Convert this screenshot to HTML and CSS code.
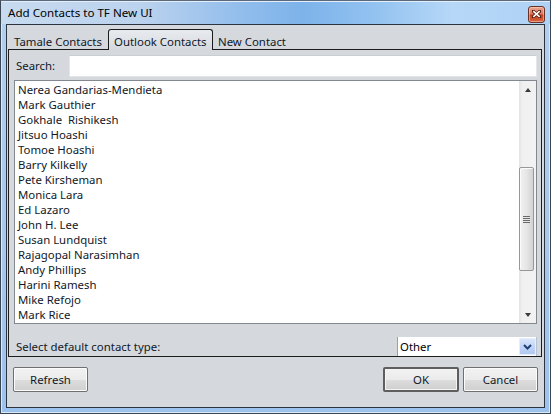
FILE: index.html
```html
<!DOCTYPE html>
<html lang="en">
<head>
  <meta charset="UTF-8" />
  <title>Add Contacts to TF New UI</title>
  <link rel="stylesheet" href="styles.css">
</head>
<body>
  <div class="window">
    <div class="titlebar">
      <span class="title">Add Contacts to TF New UI</span>
      <span class="close">
        <svg width="9" height="8" viewBox="0 0 9 8">
          <path d="M1 1 L8 7 M8 1 L1 7" stroke="#5a1b10" stroke-width="3.2" stroke-linecap="square"/>
          <path d="M1.3 1.2 L7.7 6.8 M7.7 1.2 L1.3 6.8" stroke="#fff" stroke-width="1.6"/>
        </svg>
      </span>
    </div>

    <div class="client">
      <div class="tabs">
        <div class="tab tab-first">Tamale Contacts</div>
        <div class="tab tab-active">Outlook Contacts</div>
        <div class="tab tab-last">New Contact</div>
      </div>

      <div class="panel">
        <div class="search-row">
          <label for="search">Search:</label>
          <input type="text" id="search" class="search" />
        </div>

        <div class="listbox">
          <ul class="items">
            <li>Nerea Gandarias-Mendieta</li>
            <li>Mark Gauthier</li>
            <li>Gokhale&nbsp; Rishikesh</li>
            <li>Jitsuo Hoashi</li>
            <li>Tomoe Hoashi</li>
            <li>Barry Kilkelly</li>
            <li>Pete Kirsheman</li>
            <li>Monica Lara</li>
            <li>Ed Lazaro</li>
            <li>John H. Lee</li>
            <li>Susan Lundquist</li>
            <li>Rajagopal Narasimhan</li>
            <li>Andy Phillips</li>
            <li>Harini Ramesh</li>
            <li>Mike Refojo</li>
            <li>Mark Rice</li>
          </ul>
          <div class="scrollbar">
            <div class="arrow"><span class="tri-up"></span></div>
            <div class="track">
              <div class="thumb"><span class="grip"></span></div>
            </div>
            <div class="arrow"><span class="tri-down"></span></div>
          </div>
        </div>

        <div class="type-row">
          <span class="type-label">Select default contact type:</span>
          <div class="combo">
            <span class="combo-value">Other</span>
            <span class="combo-drop">
              <svg width="9" height="6" viewBox="0 0 9 6">
                <path d="M1 1 L4.5 4.5 L8 1" fill="none" stroke="#1d3f78" stroke-width="2"/>
              </svg>
            </span>
          </div>
        </div>
      </div>

      <div class="footer">
        <button class="btn">Refresh</button>
        <div class="spacer"></div>
        <button class="btn btn-default">OK</button>
        <button class="btn">Cancel</button>
      </div>
    </div>
  </div>
</body>
</html>
```

FILE: styles.css
```css
* {
  box-sizing: border-box;
}
body {
  margin: 0;
  background: #fff;
  font-family: "Noto Sans", "Open Sans", sans-serif;
  font-size: 11.4px;
  color: #101828;
}
.window {
  display: flex;
  flex-direction: column;
  width: 551px;
  height: 414px;
  padding: 0 5px 5px 5px;
  border: 1px solid #3b4654;
  border-top-color: #5a6a7c;
  background: linear-gradient(180deg, #b4cfee 0%, #a8c8ec 60%, #9cc2ee 100%);
  box-shadow: inset 1px 1px 0 #dbe8f6, inset -1px -1px 0 #dbe8f6;
}
.titlebar {
  display: flex;
  align-items: center;
  height: 23px;
  margin: 0 -5px;
  padding: 0 5px 0 7px;
  background: linear-gradient(90deg, #c7daef 0%, #bcd3ee 25%, #8fbcec 45%, #7db3ea 55%, #92c2f0 68%, #b6d7f7 82%, #aed2f5 100%);
  box-shadow: inset 0 1px 0 #e3eefa;
}
.title {
  flex: 1;
  font-size: 11.6px;
  color: #000;
}
.close {
  display: flex;
  align-items: center;
  justify-content: center;
  width: 17px;
  height: 17px;
  margin-top: 3px;
  border: 1px solid #6b3124;
  border-radius: 3px;
  background: linear-gradient(180deg, #e9a792 0%, #d97b62 45%, #c2401f 55%, #d8643f 100%);
  box-shadow: inset 0 0 0 1px rgba(255, 220, 200, 0.5);
}
.client {
  flex: 1;
  display: flex;
  flex-direction: column;
  border: 1px solid #2c3440;
  background: #d5d9de;
  padding-top: 4px;
}

/* tabs */
.tabs {
  display: flex;
  height: 20px;
  margin-left: 1px;
}
.tab {
  height: 21px;
  padding-top: 5px;
  line-height: 15px;
  white-space: nowrap;
  padding-left: 5px;
}
.tab-first {
  width: 100px;
  padding-left: 6px;
}
.tab-active {
  position: relative;
  z-index: 1;
  width: 105px;
  padding-top: 4px;
  padding-left: 5px;
  border: 1px solid #1c1c1c;
  border-bottom: none;
  border-radius: 3px 3px 0 0;
  background: linear-gradient(180deg, #e8ebee 0%, #dde1e5 60%, #d5d9de 100%);
}
.tab-last {
  padding-left: 5px;
}
.panel {
  display: flex;
  flex-direction: column;
  margin: 0 2px 0 1px;
  padding: 5px 4px 0 5px;
  border: 1px solid #1c1c1c;
}
.search-row {
  display: flex;
  height: 22px;
  align-items: center;
}
.search-row label {
  width: 55px;
  padding-left: 2px;
  padding-bottom: 2px;
}
.search {
  flex: 1;
  height: 22px;
  margin: 0;
  border: 1px solid #e2e5e9;
  border-top-color: #c9ced4;
  background: #fff;
  font: inherit;
}

/* list */
.listbox {
  display: flex;
  height: 244px;
  margin-top: 3px;
  border: 1px solid #828790;
  background: #fff;
}
.items {
  flex: 1;
  margin: 0;
  padding: 1px 0 0 3px;
  list-style: none;
  overflow: hidden;
}
.items li {
  height: 15px;
  line-height: 15px;
  white-space: nowrap;
}
.scrollbar {
  display: flex;
  flex-direction: column;
  width: 17px;
  background: linear-gradient(90deg, #e3e3e3 0%, #f0f0f0 20%, #f2f2f2 100%);
}
.arrow {
  display: flex;
  align-items: center;
  justify-content: center;
  height: 17px;
}
.tri-up {
  border-left: 3.5px solid transparent;
  border-right: 3.5px solid transparent;
  border-bottom: 4px solid #3a3a3a;
}
.tri-down {
  border-left: 3.5px solid transparent;
  border-right: 3.5px solid transparent;
  border-top: 4px solid #3a3a3a;
}
.track {
  flex: 1;
  padding-top: 69px;
}
.thumb {
  display: flex;
  align-items: center;
  justify-content: center;
  width: 15px;
  height: 104px;
  border: 1px solid #979797;
  border-radius: 2px;
  background: linear-gradient(90deg, #f1f1f1 0%, #e6e6e6 50%, #d2d2d2 100%);
  box-shadow: inset 1px 1px 0 #fbfbfb;
}
.grip {
  width: 7px;
  height: 7px;
  background: repeating-linear-gradient(180deg, #6a6a6a 0, #6a6a6a 1px, #e6e6e6 1px, #e6e6e6 2px);
}

/* contact type */
.type-row {
  display: flex;
  align-items: center;
  justify-content: space-between;
  margin-top: 13px;
  height: 19px;
}
.type-label {
  padding-left: 2px;
}
.combo {
  display: flex;
  align-items: center;
  width: 140px;
  height: 19px;
  border-left: 1px solid #8ea2bb;
  border-right: 1px solid #b6c3d3;
  background: #fff;
}
.combo-value {
  flex: 1;
  padding-left: 2px;
  color: #000;
}
.combo-drop {
  display: flex;
  align-items: center;
  justify-content: center;
  width: 17px;
  height: 17px;
  border-radius: 2px;
  background: linear-gradient(180deg, #dce7fb 0%, #c3d5f6 50%, #adc6f1 100%);
  box-shadow: inset 0 0 0 1px #e6eefc;
}

/* footer */
.footer {
  display: flex;
  gap: 4px;
  margin-top: 10px;
  padding: 0 6px;
}
.spacer {
  flex: 1;
}
.btn {
  width: 75px;
  height: 25px;
  margin: 0;
  padding: 0;
  border: 1px solid #707070;
  border-radius: 2px;
  background: linear-gradient(180deg, #f2f2f2 0%, #ebebeb 50%, #dddddd 51%, #cfcfcf 100%);
  box-shadow: inset 0 0 0 1px #fcfcfc;
  font: inherit;
  color: #101828;
}
.btn-default {
  width: 76px;
  border: 2px solid #5e5e5e;
  box-shadow: inset 0 0 0 1px #f4f4f4;
}
```
